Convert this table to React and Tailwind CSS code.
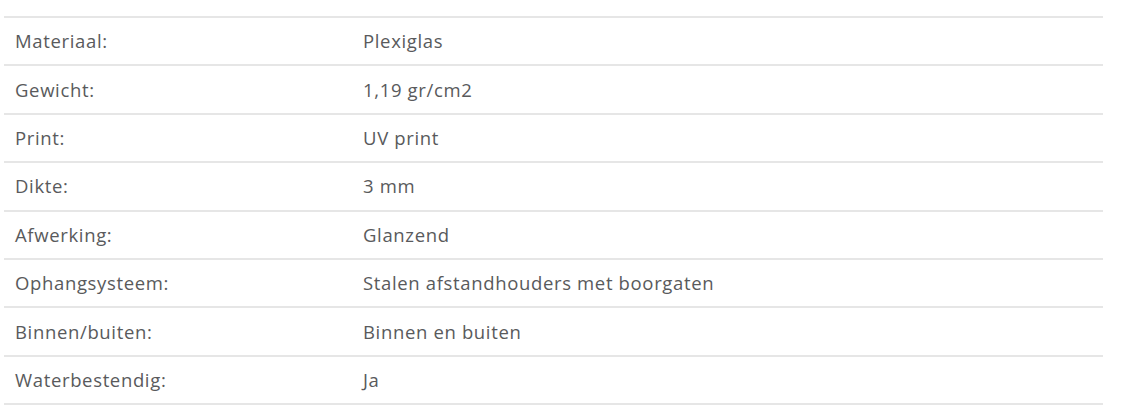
import React from 'react';

const specs = [
  ['Materiaal:', 'Plexiglas'],
  ['Gewicht:', '1,19 gr/cm2'],
  ['Print:', 'UV print'],
  ['Dikte:', '3 mm'],
  ['Afwerking:', 'Glanzend'],
  ['Ophangsysteem:', 'Stalen afstandhouders met boorgaten'],
  ['Binnen/buiten:', 'Binnen en buiten'],
  ['Waterbestendig:', 'Ja'],
];

export default function App() {
  return (
    <div className="w-[1122px] h-[420px] bg-white pt-[16px] pl-[4px]" style={{ fontFamily: '"Open Sans", "Liberation Sans", sans-serif' }}>
      <div className="w-[1099px] border-t-2 border-[#e6e6e6]">
        {specs.map(([label, value]) => (
          <div key={label} className="flex items-center h-[48.4px] border-b-2 border-[#e6e6e6] text-[18.5px] tracking-[0.65px] text-[#595a5c]">
            <div className="w-[359px] pl-[11px]">{label}</div>
            <div>{value}</div>
          </div>
        ))}
      </div>
    </div>
  );
}
